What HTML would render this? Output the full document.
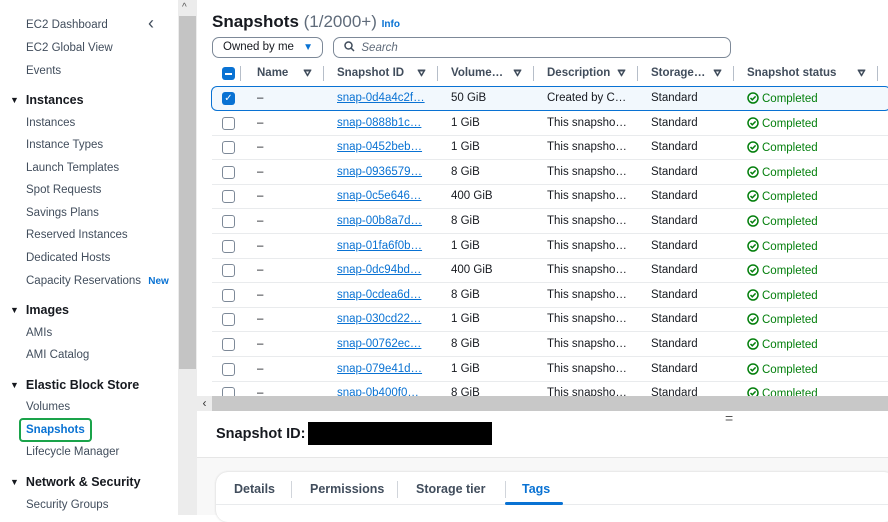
<!DOCTYPE html>
<html><head><style>
*{margin:0;padding:0;box-sizing:border-box}
body{width:888px;height:515px;overflow:hidden;font-family:"Liberation Sans",sans-serif;font-size:12px;color:#16191f;background:#fff;position:relative}
.abs{position:absolute;white-space:nowrap}
.side a{position:absolute;left:26px;color:#414d5c;font-size:11.5px}
.side h{position:absolute;left:10px;font-weight:bold;font-size:12.5px;color:#16191f}
.side h:before{content:"▼";font-size:9px;margin-right:7px;position:relative;top:-1px}
.cb{position:absolute;left:222px;width:13px;height:13px;border:1.5px solid #7d8998;border-radius:3px;background:#fff}
.row{position:absolute;left:212px;width:676px;height:25px;border-bottom:1px solid #e9ebed}
.row span{position:absolute;top:6px;font-size:11.5px}
.lk{color:#0972d3;text-decoration:underline}
.ok{color:#037f0c}
.ok svg{vertical-align:-2px;margin-right:3px}
.hd span{position:absolute;top:67px;font-weight:bold;font-size:11.5px;color:#414d5c}
.sep{position:absolute;top:66px;width:1px;height:15px;background:#b6bec9}
.tri{position:absolute;top:69px}
</style></head><body>
<div class="side">
<a style="top:19px">EC2 Dashboard</a><span class="abs" style="left:148px;top:13px;font-size:18px;color:#414d5c">‹</span>
<a style="top:42px">EC2 Global View</a>
<a style="top:65px">Events</a>
<h style="top:93px">Instances</h>
<a style="top:117px">Instances</a>
<a style="top:139px">Instance Types</a>
<a style="top:162px">Launch Templates</a>
<a style="top:184px">Spot Requests</a>
<a style="top:207px">Savings Plans</a>
<a style="top:229px">Reserved Instances</a>
<a style="top:252px">Dedicated Hosts</a>
<a style="top:275px">Capacity Reservations <b style="color:#0972d3;font-size:10px;margin-left:4px">New</b></a>
<h style="top:303px">Images</h>
<a style="top:327px">AMIs</a>
<a style="top:349px">AMI Catalog</a>
<h style="top:378px">Elastic Block Store</h>
<a style="top:401px">Volumes</a>
<a style="top:424px;color:#0972d3;font-weight:bold">Snapshots</a>
<div class="abs" style="left:19px;top:418px;width:73px;height:24px;border:2px solid #1aa34a;border-radius:4px"></div>
<a style="top:446px">Lifecycle Manager</a>
<h style="top:475px">Network &amp; Security</h>
<a style="top:499px">Security Groups</a>
</div>
<div class="abs" style="left:178px;top:0;width:19px;height:515px;background:#ececec"></div>
<div class="abs" style="left:179px;top:16px;width:17px;height:353px;background:#c4c4c4"></div>
<span class="abs" style="left:182px;top:2px;font-size:10px;color:#555">^</span>
<div class="abs" style="left:197px;top:0;width:691px;height:396px;background:#fff"></div>
<div class="abs" style="left:212px;top:12px;font-size:17px;font-weight:bold">Snapshots <span style="font-weight:normal;color:#5f6b7a">(1/2000+)</span> <span style="font-size:10px;color:#0972d3">Info</span></div>
<div class="abs" style="left:212px;top:37px;width:111px;height:21px;border:1px solid #7d8998;border-radius:7px;padding:3px 10px;font-size:11.5px">Owned by me <span style="color:#0972d3;font-size:10px;margin-left:6px">▼</span></div>
<div class="abs" style="left:333px;top:37px;width:398px;height:21px;border:1px solid #7d8998;border-radius:7px;padding:3px 10px;font-size:11.5px;color:#5f6b7a;font-style:italic"><svg width="11" height="11" viewBox="0 0 11 11" style="vertical-align:-1px"><circle cx="4.5" cy="4.5" r="3.5" fill="none" stroke="#414d5c" stroke-width="1.5"/><path d="M7 7l3 3" stroke="#414d5c" stroke-width="1.5"/></svg>&nbsp; Search</div>
<div class="hd">
<div class="abs" style="left:222px;top:67px;width:13px;height:13px;background:#0972d3;border-radius:3px"><div style="margin:5.5px 3px;height:2px;background:#fff"></div></div>
<div class="sep" style="left:240px"></div>
<span style="left:257px">Name</span><div class="sep" style="left:323px"></div>
<span style="left:337px">Snapshot ID</span><div class="sep" style="left:437px"></div>
<span style="left:451px">Volume…</span><div class="sep" style="left:533px"></div>
<span style="left:547px">Description</span><div class="sep" style="left:637px"></div>
<span style="left:651px">Storage…</span><div class="sep" style="left:733px"></div>
<span style="left:747px">Snapshot status</span><div class="sep" style="left:877px"></div>
</div>
<div id="tris"></div>
<div class="abs" style="left:211px;top:86px;width:680px;height:25px;border:1.5px solid #0972d3;border-radius:6px;background:#f2f8fd"></div>
<div id="rows"></div>
<script>
var tx=[303,417,513,617,713,857],th="";
tx.forEach(function(x){th+='<svg class="abs" style="left:'+x+'px;top:69px" width="9" height="8" viewBox="0 0 9 8"><path d="M1 1h7L4.5 7z" fill="#414d5c" stroke="#414d5c" stroke-width="1" stroke-linejoin="round"/><path d="M3 2.5h3L4.5 5z" fill="#fff"/></svg>';});
document.getElementById("tris").innerHTML=th;
var ck='<svg width="12" height="12" viewBox="0 0 12 12"><circle cx="6" cy="6" r="5" fill="none" stroke="#037f0c" stroke-width="1.5"/><path d="M3.5 6l1.8 1.8L8.6 4.4" fill="none" stroke="#037f0c" stroke-width="1.5"/></svg>';
var d=[["snap-0d4a4c2f…","50 GiB","Created by C…"],["snap-0888b1c…","1 GiB"],["snap-0452beb…","1 GiB"],["snap-0936579…","8 GiB"],["snap-0c5e646…","400 GiB"],["snap-00b8a7d…","8 GiB"],["snap-01fa6f0b…","1 GiB"],["snap-0dc94bd…","400 GiB"],["snap-0cdea6d…","8 GiB"],["snap-030cd22…","1 GiB"],["snap-00762ec…","8 GiB"],["snap-079e41d…","1 GiB"],["snap-0b400f0…","8 GiB"]];
var h="";d.forEach(function(r,i){var t=86+i*24.6;
h+='<div class="row" style="top:'+t+'px;'+(i==0?'border:none':'')+'"><span style="left:45px">–</span><span class="lk" style="left:125px">'+r[0]+'</span><span style="left:239px">'+r[1]+'</span><span style="left:335px">'+(r[2]||"This snapsho…")+'</span><span style="left:439px">Standard</span><span class="ok" style="left:535px">'+ck+'Completed</span></div>';
h+=i==0?'<div class="abs" style="left:222px;top:'+(t+6)+'px;width:13px;height:13px;background:#0972d3;border-radius:3px;color:#fff;font-size:10px;text-align:center;line-height:13px">✓</div>':'<div class="cb" style="top:'+(t+6)+'px"></div>';});
document.getElementById("rows").innerHTML=h;
</script>
<div class="abs" style="left:197px;top:396px;width:691px;height:15px;background:#c8c8c8"></div>
<div class="abs" style="left:197px;top:396px;width:15px;height:15px;background:#ececec;font-size:12px;text-align:center;line-height:14px;color:#333">‹</div>
<div class="abs" style="left:197px;top:411px;width:691px;height:104px;background:#f8f8f8"></div>
<div class="abs" style="left:197px;top:411px;width:691px;height:47px;background:#fff;border-bottom:1px solid #e6e6e6"></div>
<div class="abs" style="left:216px;top:426px;font-size:14.5px;font-weight:bold">Snapshot ID:</div>
<div class="abs" style="left:308px;top:422px;width:184px;height:23px;background:#000"></div>
<div class="abs" style="left:725px;top:410px;font-size:14px;color:#555">=</div>
<div class="abs" style="left:216px;top:472px;width:680px;height:50px;background:#fff;border-radius:12px;box-shadow:0 0 2px #ccc"></div>
<div class="abs" style="left:216px;top:504px;width:672px;height:1px;background:#e9ebed"></div>
<div class="abs" style="left:234px;top:482px;font-size:12.5px;font-weight:bold;color:#414d5c">Details</div>
<div class="abs" style="left:291px;top:481px;width:1px;height:17px;background:#d1d5db"></div>
<div class="abs" style="left:310px;top:482px;font-size:12.5px;font-weight:bold;color:#414d5c">Permissions</div>
<div class="abs" style="left:397px;top:481px;width:1px;height:17px;background:#d1d5db"></div>
<div class="abs" style="left:416px;top:482px;font-size:12.5px;font-weight:bold;color:#414d5c">Storage tier</div>
<div class="abs" style="left:505px;top:481px;width:1px;height:17px;background:#d1d5db"></div>
<div class="abs" style="left:522px;top:482px;font-size:12.5px;font-weight:bold;color:#0972d3">Tags</div>
<div class="abs" style="left:505px;top:502px;width:58px;height:3px;background:#0972d3;border-radius:2px"></div>
</body></html>
